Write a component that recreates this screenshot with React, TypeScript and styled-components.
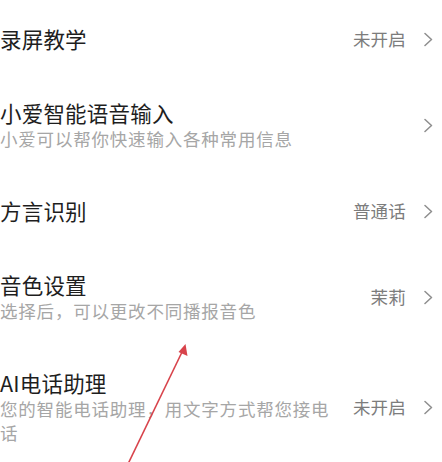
import React from "react";
import styled, { createGlobalStyle } from "styled-components";

const Global = createGlobalStyle`
  html, body { margin: 0; padding: 0; background: #ffffff; }
  body { font-family: "Noto Sans CJK SC", "Noto Sans", sans-serif; }
`;

const Page = styled.div`
  position: relative;
  width: 442px;
  height: 462px;
  overflow: hidden;
  background: #ffffff;
  padding-top: 2px;
  box-sizing: border-box;
`;

const List = styled.div`
  display: flex;
  flex-direction: column;
`;

const Row = styled.div`
  display: flex;
  align-items: center;
  padding: 23px 9px 23px 0;
`;

const TextCol = styled.div`
  flex: 1;
  min-width: 0;
  display: flex;
  flex-direction: column;
`;

const Title = styled.div`
  font-size: 21.5px;
  letter-spacing: 0.2px;
  line-height: 28px;
  color: #1e1e1e;
`;

const Sub = styled.div`
  font-size: 17.5px;
  letter-spacing: 0.8px;
  line-height: 24px;
  color: #a6a6a6;
`;

const Value = styled.div`
  margin-left: 20px;
  font-size: 17.5px;
  letter-spacing: 0.2px;
  line-height: 24px;
  color: #7c7c7c;
  white-space: nowrap;
`;

const Chevron = styled.svg`
  margin-left: 18px;
  flex: none;
`;

const Arrow = styled.svg`
  position: absolute;
  left: 0;
  top: 0;
  pointer-events: none;
`;

const ChevronIcon = () => (
  <Chevron width="9" height="15" viewBox="0 0 9 15">
    <polyline points="1,1.5 7.5,7.5 1,13.5" fill="none" stroke="#8e8e8e" strokeWidth="1.5" strokeLinecap="round" strokeLinejoin="round" />
  </Chevron>
);

type Item = { title: string; sub?: string; value?: string };

const items: Item[] = [
  { title: "录屏教学", value: "未开启" },
  { title: "小爱智能语音输入", sub: "小爱可以帮你快速输入各种常用信息" },
  { title: "方言识别", value: "普通话" },
  { title: "音色设置", sub: "选择后，可以更改不同播报音色", value: "茉莉" },
  { title: "AI电话助理", sub: "您的智能电话助理，用文字方式帮您接电话", value: "未开启" },
];

export default function App() {
  return (
    <>
      <Global />
      <Page>
        <List>
          {items.map((it) => (
            <Row key={it.title}>
              <TextCol>
                <Title>{it.title}</Title>
                {it.sub && <Sub>{it.sub}</Sub>}
              </TextCol>
              {it.value && <Value>{it.value}</Value>}
              <ChevronIcon />
            </Row>
          ))}
        </List>
        <Arrow width="442" height="462" viewBox="0 0 442 462">
          <line x1="128" y1="464" x2="183" y2="350" stroke="#d8434b" strokeWidth="1.6" />
          <polygon points="185.5,344 187.5,356 178.5,352" fill="#d8434b" />
        </Arrow>
      </Page>
    </>
  );
}
